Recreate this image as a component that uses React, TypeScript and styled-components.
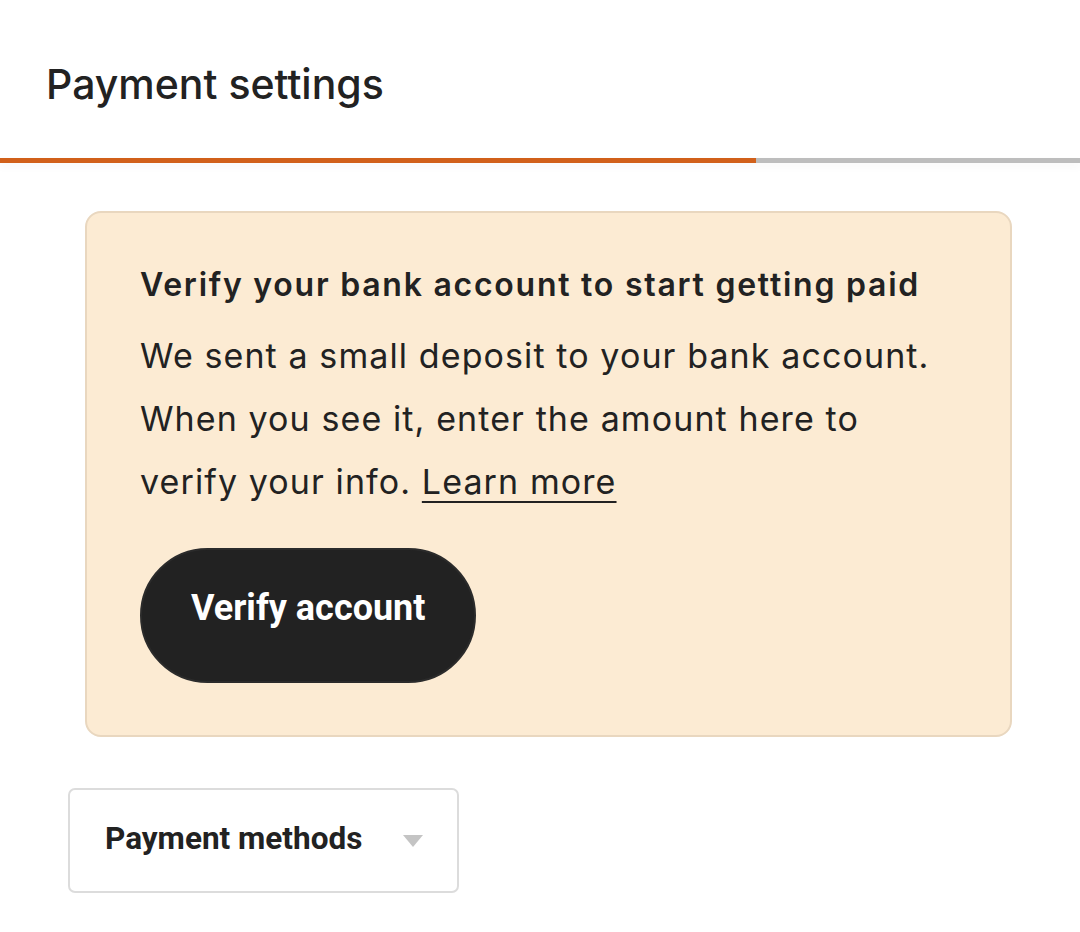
import React from 'react';
import styled, { createGlobalStyle } from 'styled-components';

const GlobalStyle = createGlobalStyle`
  html, body {
    margin: 0;
    padding: 0;
    background: #ffffff;
  }
  body {
    font-family: Inter, "Noto Sans", sans-serif;
    color: #222222;
  }
`;

const Page = styled.div`
  width: 1080px;
  min-height: 932px;
  background: #ffffff;
`;

const Header = styled.header`
  height: 158px;
  padding: 10px 46px 0;
  display: flex;
  align-items: center;
  box-sizing: border-box;
`;

const PageTitle = styled.h1`
  margin: 0;
  font-family: Inter, sans-serif;
  font-size: 41px;
  font-weight: 500;
  color: #222222;
`;

const Progress = styled.div`
  height: 5px;
  background: #bdbdbd;
  box-shadow: 0 4px 8px rgba(0, 0, 0, 0.04);
`;

const ProgressFill = styled.div`
  height: 100%;
  background: #d1601a;
`;

const Body = styled.main`
  padding: 48px 68px 40px 68px;
  display: flex;
  flex-direction: column;
  align-items: flex-start;
`;

const Notice = styled.section`
  align-self: stretch;
  margin: 0 0 51px 17px;
  padding: 50px 53px 52px 53px;
  background: #fcebd3;
  border: 2px solid #e9d7bf;
  border-radius: 16px;
`;

const NoticeTitle = styled.h2`
  margin: 0 0 17px;
  font-family: Inter, sans-serif;
  font-size: 32px;
  font-weight: 600;
  line-height: 44px;
  letter-spacing: 1.75px;
  color: #222222;
  white-space: nowrap;
`;

const NoticeText = styled.p`
  margin: 0;
  font-family: Inter, sans-serif;
  font-size: 34px;
  font-weight: 400;
  line-height: 63px;
  letter-spacing: 1.1px;
  color: #222222;
  white-space: nowrap;
`;

const TextLink = styled.a`
  color: #222222;
  text-decoration: underline;
  text-underline-offset: 7px;
  text-decoration-thickness: 2px;
`;

const PillButton = styled.button`
  margin-top: 35px;
  height: 135px;
  padding: 0 49px 16px;
  border: 2px solid #2b2b2b;
  border-radius: 68px;
  background: #222222;
  color: #ffffff;
  font-family: Roboto, sans-serif;
  font-size: 36px;
  font-weight: 700;
  cursor: pointer;
`;

const SelectBox = styled.div`
  width: 391px;
  height: 105px;
  box-sizing: border-box;
  padding: 0 34px 4px 35px;
  display: flex;
  align-items: center;
  justify-content: space-between;
  border: 2px solid #dcdcdc;
  border-radius: 7px;
  background: #ffffff;
`;

const SelectLabel = styled.span`
  font-family: Roboto, sans-serif;
  font-size: 31.5px;
  font-weight: 700;
  color: #222222;
`;

const Caret = styled.span`
  width: 0;
  height: 0;
  margin-top: 4px;
  border-left: 10px solid transparent;
  border-right: 10px solid transparent;
  border-top: 12px solid #c4c4c4;
`;

export default function App() {
  return (
    <Page>
      <GlobalStyle />
      <Header>
        <PageTitle>Payment settings</PageTitle>
      </Header>
      <Progress>
        <ProgressFill style={{ width: `${(756 / 1080) * 100}%` }} />
      </Progress>
      <Body>
        <Notice>
          <NoticeTitle>Verify your bank account to start getting paid</NoticeTitle>
          <NoticeText>
            We sent a small deposit to your bank account.
            <br />
            When you see it, enter the amount here to
            <br />
            verify your info. <TextLink href="#">Learn more</TextLink>
          </NoticeText>
          <PillButton>Verify account</PillButton>
        </Notice>
        <SelectBox>
          <SelectLabel>Payment methods</SelectLabel>
          <Caret />
        </SelectBox>
      </Body>
    </Page>
  );
}
